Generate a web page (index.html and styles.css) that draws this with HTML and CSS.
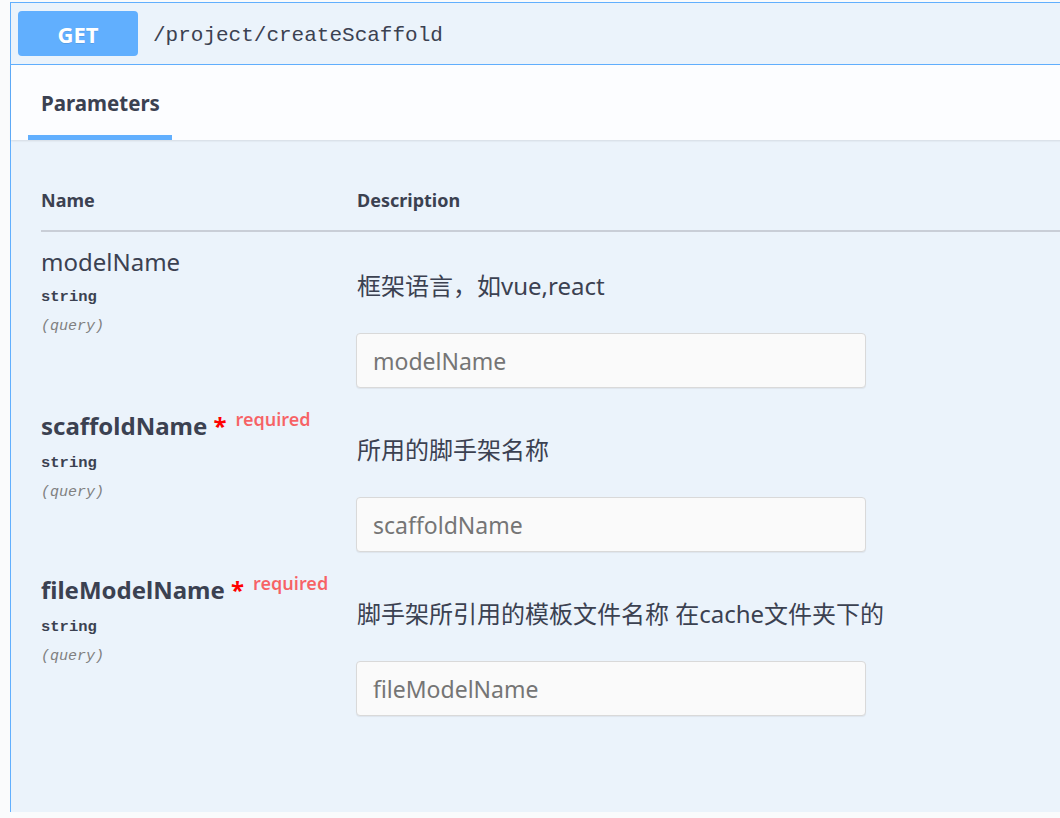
FILE: index.html
```html
<!DOCTYPE html>
<html lang="zh-CN">
<head>
<meta charset="utf-8">
<title>createScaffold</title>
<link rel="stylesheet" href="styles.css">
</head>
<body>
<div class="opblock">
  <div class="summary">
    <span class="method">GET</span>
    <span class="path">/project/createScaffold</span>
  </div>
  <div class="section-header">
    <div class="tab">Parameters</div>
  </div>
  <div class="params">
    <div class="head">
      <div class="col-name">Name</div>
      <div class="col-desc">Description</div>
    </div>
    <div class="rows">
      <div class="row">
        <div class="col-name">
          <div class="pname">modelName</div>
          <div class="ptype">string</div>
          <div class="pin">(query)</div>
        </div>
        <div class="col-desc">
          <div class="desc">框架语言，如vue,react</div>
          <input class="field" type="text" placeholder="modelName">
        </div>
      </div>
      <div class="row">
        <div class="col-name">
          <div class="pname req">scaffoldName <span class="star">*</span><span class="required">required</span></div>
          <div class="ptype">string</div>
          <div class="pin">(query)</div>
        </div>
        <div class="col-desc">
          <div class="desc">所用的脚手架名称</div>
          <input class="field" type="text" placeholder="scaffoldName">
        </div>
      </div>
      <div class="row">
        <div class="col-name">
          <div class="pname req">fileModelName <span class="star">*</span><span class="required">required</span></div>
          <div class="ptype">string</div>
          <div class="pin">(query)</div>
        </div>
        <div class="col-desc">
          <div class="desc">脚手架所引用的模板文件名称 在cache文件夹下的</div>
          <input class="field" type="text" placeholder="fileModelName">
        </div>
      </div>
    </div>
  </div>
</div>
</body>
</html>
```

FILE: styles.css
```css
html, body {
  margin: 0;
  padding: 0;
}
body {
  background: #fafbfc;
  overflow: hidden;
  font-family: "Noto Sans", "Noto Sans CJK SC", sans-serif;
  color: #3b4151;
}
.opblock {
  margin: 2px -20px 0 10px;
  border: 1px solid #61affe;
  border-bottom: none;
  background: #ebf3fb;
}
.summary {
  display: flex;
  align-items: center;
  height: 61px;
  border-bottom: 1px solid #61affe;
}
.method {
  margin-left: 7px;
  width: 120px;
  height: 45px;
  border-radius: 4px;
  background: #61affe;
  color: #fff;
  font-weight: 700;
  font-size: 22px;
  display: flex;
  align-items: center;
  justify-content: center;
  text-shadow: 0 1px 0 rgba(0,0,0,.1);
}
.path {
  margin-left: 15px;
  padding-top: 4px;
  font-family: "Liberation Mono", monospace;
  font-size: 21px;
  color: #3b4151;
}
.section-header {
  height: 75px;
  background: rgba(255,255,255,.82);
  box-shadow: 0 1px 2px rgba(0,0,0,.1);
  padding-left: 17px;
  display: flex;
  align-items: flex-end;
}
.tab {
  width: 144px;
  box-sizing: border-box;
  padding: 0 0 18px 13px;
  border-bottom: 5px solid #61affe;
  font-size: 20.5px;
  font-weight: 700;
  line-height: 28px;
}
.params {
  padding: 48px 0 80px 30px;
}
.head {
  display: flex;
  font-size: 18px;
  font-weight: 700;
  line-height: 24px;
  padding-bottom: 18px;
  border-bottom: 2px solid #c9ced7;
}
.col-name {
  width: 316px;
  flex: none;
}
.col-desc {
  flex: 1;
}
.rows {
  padding-top: 8px;
}
.row {
  display: flex;
  height: 164px;
}
.pname {
  padding-top: 8px;
  font-size: 24px;
  line-height: 28px;
  white-space: nowrap;
}
.pname.req {
  font-weight: 700;
}
.star {
  color: #f00;
}
.required {
  font-size: 18px;
  font-weight: 600;
  color: rgba(255,0,0,.6);
  position: relative;
  top: -9px;
  padding-left: 9px;
}
.ptype {
  margin-top: 11px;
  font-family: "Liberation Mono", monospace;
  font-weight: 700;
  font-size: 15.5px;
  line-height: 20px;
}
.pin {
  margin-top: 10px;
  font-family: "Liberation Mono", monospace;
  font-style: italic;
  font-size: 15px;
  line-height: 20px;
  color: #808080;
}
.desc {
  margin-top: 31px;
  font-size: 24px;
  line-height: 30px;
}
.field {
  display: block;
  margin: 32px 0 0 -1px;
  width: 510px;
  height: 55px;
  box-sizing: border-box;
  border: 1px solid #d9d9d9;
  border-radius: 4px;
  background: #fafafa;
  padding: 0 16px;
  font-family: "Noto Sans", "Noto Sans CJK SC", sans-serif;
  font-size: 23px;
  color: #3b4151;
  box-shadow: 0 1px 1px rgba(0,0,0,.06);
}
.field::placeholder {
  color: #757575;
}
```
